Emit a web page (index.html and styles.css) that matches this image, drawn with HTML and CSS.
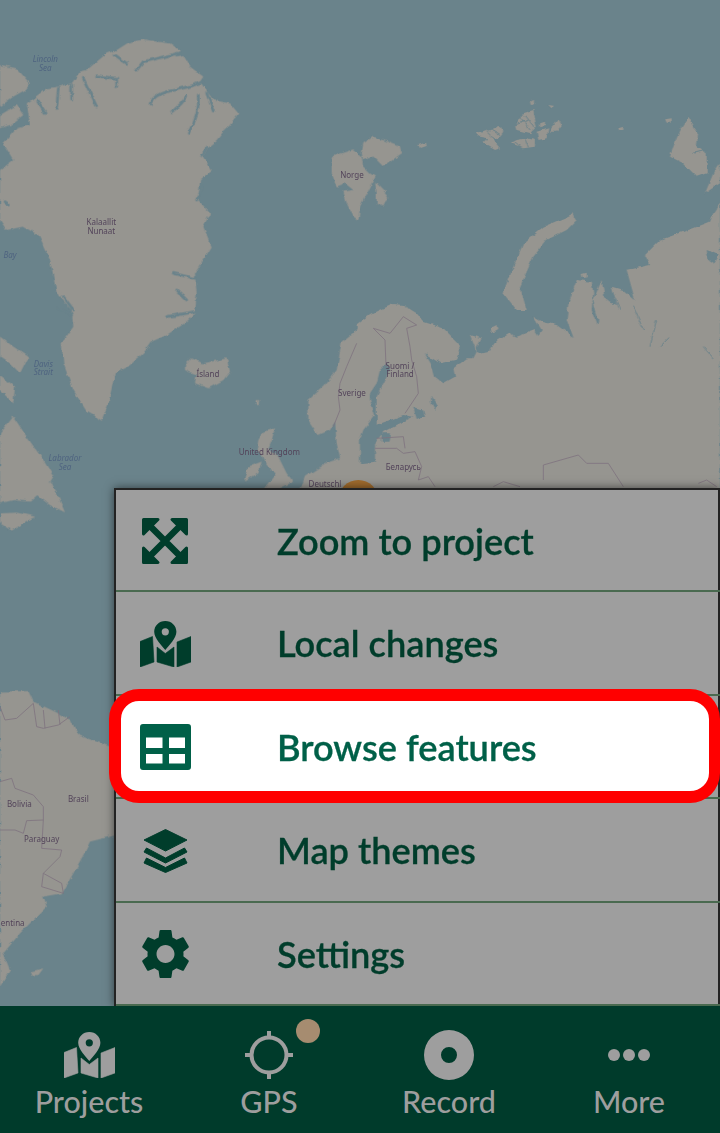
FILE: index.html
```html
<!DOCTYPE html>
<html lang="en">
<head>
<meta charset="utf-8">
<title>Map menu</title>
<link rel="stylesheet" href="styles.css">
</head>
<body>
<svg width="0" height="0" class="defs">
  <filter id="coast" x="-5%" y="-5%" width="110%" height="110%">
    <feTurbulence type="fractalNoise" baseFrequency=".045" numOctaves="3" seed="4" result="n"/>
    <feDisplacementMap in="SourceGraphic" in2="n" scale="13" xChannelSelector="R" yChannelSelector="G"/>
  </filter>
  <symbol id="i-map" viewBox="0 0 51 46">
    <path fill-rule="evenodd" d="M25.3 0C19 0 14.2 4.9 14.2 10.8c0 6.6 7.6 14 11.1 18.2 3.5-4.2 11.1-11.6 11.1-18.2C36.400 4.900 31.600 0 25.300 0zM25.300 7.200a3.600 3.600 0 1 1 0 7.200 3.600 3.600 0 0 1 0-7.200z"/>
    <path d="M0 20.500 12.500 15.500 14 41 0 46zM17 26 25.300 32.500 34 26V46L17 41zM37 21 51 15.500V41L37 46z" stroke="currentColor" stroke-width=".6" stroke-linejoin="round"/>
  </symbol>
</svg>
<main class="screen">
  <svg class="map" viewBox="0 0 2160 3399" aria-hidden="true">
    <rect class="water" width="2160" height="3399"/>
    <g class="coast">
      <g class="land">
        <path d="M385 128 430 118 470 125 510 130 540 150 525 170 550 165 570 200 610 230 600 245 625 280 640 300 690 310 715 340 690 375 670 395 650 420 625 440 610 470 635 510 600 540 595 600 630 640 610 680 635 740 610 780 585 820 590 880 585 940 560 965 500 1005 455 1025 430 1060 385 1100 345 1120 325 1210 305 1260 260 1235 220 1170 190 1090 185 1030 220 980 215 930 170 880 150 780 115 705 70 680 20 690 0 660 0 510 40 480 10 430 50 385 90 375 80 310 140 265 175 260 215 250 240 215 260 210 320 160 350 150z"/>
        <path d="M0 195 25 200 50 205 90 250 75 270 40 290 0 320zM0 345 50 315 70 345 30 375 0 385zM0 1010 40 1040 85 1070 60 1120 30 1090 0 1070zM0 1125 45 1160 40 1210 0 1170zM0 1300 40 1250 80 1310 130 1380 160 1430 130 1480 120 1478 90 1505 40 1500 0 1510zM105 1480 155 1445 195 1537 150 1515 130 1500zM0 1540 50 1538 105 1550 35 1592 0 1570z"/>
        <path d="M0 2075 85 2073 100 2105 165 2135 212 2160 235 2205 330 2240 370 2240 370 2500 270 2525 250 2565 220 2620 185 2680 130 2690 140 2720 60 2800 10 2860 30 2910 0 2960zM90 2915 130 2905 115 2925 95 2925z"/>
        <path d="M995 470 1030 458 1060 448 1085 470 1090 500 1110 520 1125 530 1110 560 1095 590 1080 620 1075 660 1060 650 1040 610 1030 575 1060 570 1035 550 1010 560 995 520zM1090 430 1120 410 1150 420 1200 440 1205 460 1150 500 1120 470 1090 480 1085 460zM1125 545 1150 570 1165 590 1150 620 1130 610 1130 575z"/>
        <path d="M555 1095 575 1075 610 1090 680 1075 690 1115 670 1140 625 1165 585 1150 590 1125 555 1110z"/>
        <path d="M775 1320 790 1295 825 1285 815 1320 805 1345 835 1370 860 1420 880 1445 840 1465 790 1470 830 1420 800 1395 790 1370 770 1350zM745 1400 785 1385 775 1420 735 1445zM770 1200 778 1200 775 1215 770 1215z"/>
        <path d="M1090 975 1050 1005 1025 1025 1010 1110 970 1160 925 1200 925 1260 955 1305 990 1290 1005 1265 1010 1330 1020 1375 975 1390 945 1410 915 1430 900 1470 1090 1500z"/>
        <g class="east">
          <path d="M-10 975 30 945 60 930 100 912 130 915 170 940 190 965 250 985 295 1030 300 1055 285 1080 240 1090 195 1062 215 1095 225 1130 250 1150 285 1130 280 1105 320 1075 340 1075 350 1055 330 1005 365 1015 350 1045 355 1062 385 1055 400 1030 450 1000 470 1010 525 990 535 1005 545 990 520 950 545 965 590 975 640 1012 620 960 625 910 650 840 695 845 700 880 695 930 715 985 745 985 770 1040 735 1000 715 1030 690 1080 650 1070 700 1010 715 960 700 900 725 840 735 900 770 915 755 860 790 870 825 900 800 810 870 795 855 765 900 720 1000 685 1050 665 1060 640 1080 610V1500H-10z"/>
          <path d="M640 640 650 660 620 690 560 720 520 770 480 860 500 930 470 930 430 880 460 800 490 730 550 680 620 650z"/>
          <path d="M985 350 1015 400 1010 440 1040 460 1040 520 1010 530 970 490 930 470 940 440 960 390zM1035 580 1060 520 1080 490 1080 550z"/>
          <path d="M350 400 375 390 385 395 420 380 430 395 415 415 400 420 420 445 405 450 370 430 385 415 360 410zM465 375 490 340 520 330 530 380 510 400 470 390zM450 430 470 420 500 415 525 420 525 440 490 445zM530 395 565 385 560 415 535 420zM575 380 595 358 605 375 590 395 570 395zM540 370 555 365 555 378 540 382zM510 305 525 300 525 312 512 315zM565 315 585 318 575 325zM178 435 198 428 200 438 182 444zM915 358 935 355 935 368 920 368zM775 385 790 380 790 390 778 392zM390 985 410 975 412 990 395 1000zM665 822 680 818 680 832 668 834z"/>
        </g>
      </g>
      <g class="fjords">
        <path d="M610 245Q560 265 500 275 460 285 450 312M560 285Q550 310 515 335M595 285Q600 340 565 400M540 158Q480 175 430 185L410 210M620 280 640 330"/>
        <path d="M215 255 215 300M175 265 170 325M250 235 290 320M290 228 350 235 350 260M345 165 380 190M110 300 135 340M15 605 25 612"/>
        <path d="M582 935 530 945 500 950M560 900 530 870M585 835 520 820M610 560 590 600M620 440 605 470M175 925 215 945M190 890 220 930"/>
      </g>
      <g class="east fine">
        <path d="M480 350 510 390M495 345 525 385M465 375 505 360M460 425 480 440M495 418 505 442M380 395 410 425M395 390 420 405M1000 460 1040 450"/>
        <path d="M750 860 780 930M820 920 850 990M930 1010 900 1040M1030 1040 1060 1075M1050 750 1060 790M890 960 870 1040"/>
      </g>
      <g class="east lakes">
        <path d="M80 1090 60 1110 50 1150 30 1180 30 1200 45 1245 10 1290 0 1320 0 1390 45 1385 45 1330 70 1295 120 1270 160 1250 130 1245 50 1275 50 1190 80 1130 90 1105z"/>
        <path d="M160 1220 190 1230 195 1250 170 1260zM215 1190 230 1215 225 1230 212 1205zM65 1300 90 1300 85 1325 65 1325zM1040 750 1075 765 1060 790 1045 780z"/>
      </g>
    </g>
    <g class="borders">
      <path d="M1070 1030 1040 1100 1020 1150 1015 1190 1020 1230 1000 1280"/>
      <path d="M1120 985 1155 1020 1158 1100M1120 985 1170 1000 1210 950 1250 975 1220 985 1230 1040 1235 1080 1250 1130 1255 1180 1215 1240M1125 1345 1190 1345 1210 1360 1245 1355 1265 1400 1255 1440 1285 1430 1305 1460M1130 1315 1210 1310 1215 1345M1630 1440 1630 1395 1735 1365 1760 1390 1825 1390 1870 1460M1480 1460 1510 1445 1560 1460M2095 1450 2120 1440 2150 1460"/>
      <path d="M0 2120 15 2160 50 2155 100 2110 110 2180 130 2185 175 2175 210 2150M130 2130 135 2185M175 2130 180 2175M0 2345 35 2335 45 2365 100 2385 130 2420 130 2460 80 2462 70 2500 45 2490 0 2490M130 2460 125 2545 185 2550 180 2570 130 2620 125 2660 190 2680 185 2650 130 2620"/>
    </g>
    <circle class="cluster" cx="1075" cy="1500" r="60"/>
    <g class="labels">
      <text x="304" y="676">Kalaallit</text>
      <text x="304" y="702">Nunaat</text>
      <text x="624" y="1130">Ísland</text>
      <text x="808" y="1366">United Kingdom</text>
      <text x="975" y="1460">Deutschl</text>
      <text x="1056" y="1189">Sverige</text>
      <text x="1056" y="534">Norge</text>
      <text x="1200" y="1106">Suomi /</text>
      <text x="1200" y="1132">Finland</text>
      <text x="1210" y="1410">Беларусь</text>
      <text x="58" y="2420">Bolivia</text>
      <text x="235" y="2405">Brasil</text>
      <text x="125" y="2525">Paraguay</text>
      <text x="38" y="2778">entina</text>
    </g>
    <g class="labels sea">
      <text x="136" y="187">Lincoln</text>
      <text x="136" y="212">Sea</text>
      <text x="30" y="774">Bay</text>
      <text x="130" y="1100">Davis</text>
      <text x="130" y="1126">Strait</text>
      <text x="195" y="1382">Labrador</text>
      <text x="195" y="1409">Sea</text>
    </g>
  </svg>

  <div class="content">
    <div class="menu-wrap">
      <nav class="menu">
        <a class="row">
          <span class="row-icon">
            <svg class="zoom-ic" viewBox="0 0 46 46"><path d="M1.500 1.500H16L1.500 16zM44.500 1.500V16L30 1.500zM1.500 44.500V30L16 44.500zM44.500 44.500H30L44.500 30z" stroke="currentColor" stroke-width="3" stroke-linejoin="round"/><path d="M6 6 40 40M40 6 6 40" stroke="currentColor" stroke-width="6.500"/></svg>
          </span>
          <span class="row-label">Zoom to project</span>
        </a>
        <a class="row">
          <span class="row-icon"><svg class="map-ic"><use href="#i-map"/></svg></span>
          <span class="row-label">Local changes</span>
        </a>
        <a class="row active">
          <span class="ring"></span>
          <span class="row-icon">
            <svg class="table-ic" viewBox="0 0 51 46"><path fill-rule="evenodd" d="M3 0H48A3 3 0 0 1 51 3V43A3 3 0 0 1 48 46H3A3 3 0 0 1 0 43V3A3 3 0 0 1 3 0zM6 13.500V24H22.500V13.500zM29 13.500V24H45V13.500zM6 30V39.500H22.500V30zM29 30V39.500H45V30z"/></svg>
          </span>
          <span class="row-label">Browse features</span>
        </a>
        <a class="row">
          <span class="row-icon">
            <svg class="layers-ic" viewBox="0 0 44 44"><path d="M22 .5 43.500 11 22 22 .5 11zM3 19 22 29 41 19 43.500 23 22 34 .5 23zM3 29 22 38.500 41 29 43.500 34 22 43.500 .5 34z" stroke="currentColor" stroke-width="1" stroke-linejoin="round"/></svg>
          </span>
          <span class="row-label">Map themes</span>
        </a>
        <a class="row">
          <span class="row-icon">
            <svg class="gear-ic" viewBox="2.600 2 18.800 20"><path d="M19.140 12.940c.04-.3.06-.61.06-.94 0-.32-.02-.64-.07-.94l2.030-1.580c.18-.14.23-.41.12-.61l-1.920-3.320c-.12-.22-.37-.29-.59-.22l-2.390.96c-.5-.38-1.030-.7-1.620-.94l-.36-2.540c-.04-.24-.24-.41-.48-.41h-3.840c-.24 0-.43.17-.47.41l-.36 2.540c-.59.24-1.130.57-1.620.94l-2.390-.96c-.22-.08-.47 0-.59.22L2.740 8.870c-.12.21-.08.47.12.61l2.030 1.580c-.05.3-.09.63-.09.94s.02.64.07.94l-2.030 1.580c-.18.14-.23.41-.12.61l1.920 3.320c.12.22.37.29.59.22l2.390-.96c.5.38 1.030.7 1.620.94l.36 2.540c.05.24.24.41.48.41h3.840c.24 0 .44-.17.47-.41l.36-2.540c.59-.24 1.130-.56 1.620-.94l2.390.96c.22.08.47 0 .59-.22l1.920-3.320c.12-.22.07-.47-.12-.61l-2.010-1.580zM12 15.600c-1.980 0-3.600-1.620-3.600-3.600s1.620-3.600 3.600-3.600 3.600 1.620 3.600 3.600-1.620 3.600-3.600 3.600z"/></svg>
          </span>
          <span class="row-label">Settings</span>
        </a>
      </nav>
    </div>

    <footer class="tabs">
      <a class="tab">
        <span class="tab-icon"><svg class="map-ic"><use href="#i-map"/></svg></span>
        <span class="tab-label">Projects</span>
      </a>
      <a class="tab">
        <span class="tab-icon">
          <svg class="gps-ic" viewBox="0 0 48 48"><circle cx="24" cy="24" r="17.500"/><path d="M24 0V6.500M24 41.500V48M0 24H6.500M41.500 24H48"/></svg>
          <span class="badge"></span>
        </span>
        <span class="tab-label">GPS</span>
      </a>
      <a class="tab">
        <span class="tab-icon">
          <svg class="rec-ic" viewBox="0 0 50 50"><path fill-rule="evenodd" d="M25 0a25 25 0 1 1 0 50 25 25 0 0 1 0-50zM25 17a8 8 0 1 0 0 16 8 8 0 0 0 0-16z"/></svg>
        </span>
        <span class="tab-label">Record</span>
      </a>
      <a class="tab">
        <span class="tab-icon">
          <svg class="more-ic" viewBox="0 0 42 12"><circle cx="6" cy="6" r="6"/><circle cx="21" cy="6" r="6"/><circle cx="36" cy="6" r="6"/></svg>
        </span>
        <span class="tab-label">More</span>
      </a>
    </footer>
  </div>
</main>
</body>
</html>
```

FILE: styles.css
```css
* { box-sizing: border-box; }

html, body {
  margin: 0;
  padding: 0;
  height: 100%;
  overflow: hidden;
  background: #6a838b;
}

.defs { position: absolute; }

.screen {
  position: relative;
  width: 720px;
  height: 1133px;
  font-family: "Lato", "Liberation Sans", sans-serif;
}

/* map canvas */
.map {
  position: absolute;
  left: 0;
  top: 0;
  width: 720px;
  height: 1133px;
  filter: blur(0.3px);
}
.water { fill: #6a838b; }
.coast { filter: url(#coast); }
.land { fill: #969590; }
.east { transform: translateX(1080px); }
.lakes { fill: #6a838b; }
.fjords { fill: none; stroke: #6a838b; stroke-width: 8; stroke-linecap: round; }
.fine { fill: none; stroke: #6a838b; stroke-width: 3; }
.borders { fill: none; stroke: #7f7480; stroke-width: 2.500; }
.cluster { fill: #9f6b2d; }
.labels {
  font-family: "Noto Sans", sans-serif;
  font-size: 24px;
  fill: #53445a;
  text-anchor: middle;
}
.labels.sea { fill: #4f6480; font-style: italic; }

.content {
  position: relative;
  height: 100%;
  display: flex;
  flex-direction: column;
  justify-content: flex-end;
}

/* menu */
.menu-wrap {
  display: flex;
  justify-content: flex-end;
}
.menu {
  width: 606px;
  height: 518px;
  display: flex;
  flex-direction: column;
  background: #9e9e9e;
  border: 2px solid #232323;
  border-bottom: 0;
  box-shadow: 0 0 9px rgba(0, 0, 0, .55);
}
.row {
  position: relative;
  flex: 1;
  display: grid;
  grid-template-columns: 161px 1fr;
  align-items: center;
  margin-right: -2px;
  border-bottom: 2px solid #4a6a50;
  color: #003d2b;
}
.row:first-child { flex: 0 0 102px; }
.row-icon {
  position: relative;
  top: 1px;
  display: flex;
  justify-content: center;
  width: 52px;
  margin-left: 23px;
}
.row-label {
  position: relative;
  padding-top: 1px;
  font-size: 36.200px;
  font-weight: 600;
  line-height: 40px;
  -webkit-text-stroke: .3px currentColor;
}
.row.active { color: #006048; }
.ring {
  position: absolute;
  top: -6.500px;
  bottom: -6px;
  left: -7px;
  right: 0;
  background: #fff;
  border: 12px solid #f00;
  border-right-width: 11px;
  border-radius: 30px;
}

/* icons */
.row-icon svg, .tab-icon svg { display: block; fill: currentColor; }
.zoom-ic { width: 48px; height: 46px; }
.map-ic { width: 51px; height: 46px; }
.table-ic { width: 51px; height: 46px; }
.layers-ic { width: 45px; height: 44px; }
.gear-ic { width: 49px; height: 50px; }

/* bottom tabs */
.tabs {
  height: 127px;
  display: grid;
  grid-template-columns: repeat(4, 180px);
  background: #003b2b;
  color: #9e9e9e;
}
.tab {
  display: flex;
  flex-direction: column;
  align-items: center;
  padding: 23px 2px 0 0;
}
.tab-icon {
  position: relative;
  height: 52px;
  display: flex;
  align-items: center;
  justify-content: center;
}
.tab-label {
  margin-top: 2px;
  font-size: 30.500px;
  font-weight: 500;
  line-height: 36px;
}
.gps-ic { width: 48px; height: 48px; fill: none !important; stroke: currentColor; stroke-width: 4; }
.rec-ic { width: 50px; height: 50px; }
.more-ic { width: 42px; height: 12px; }
.badge {
  position: absolute;
  left: 51px;
  top: -10px;
  width: 24px;
  height: 24px;
  border-radius: 50%;
  background: #a68c70;
}
```
